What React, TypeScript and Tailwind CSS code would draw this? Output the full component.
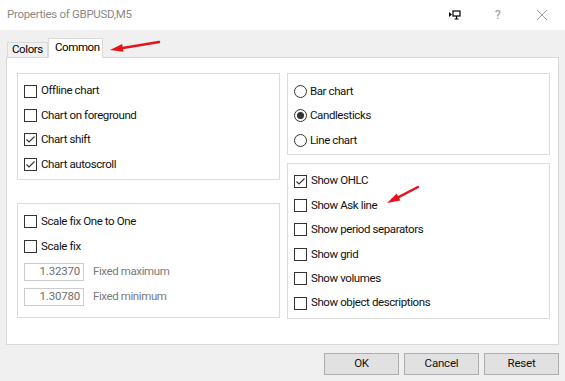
import React from "react";

const font = { fontFamily: "Roboto, 'Noto Sans', sans-serif" };

const Check = ({ checked, label }: { checked?: boolean; label: string }) => (
  <div className="flex items-center h-[24.4px] pl-[6px]">
    <span className="w-[13px] h-[13px] border border-[#333333] bg-white flex items-center justify-center shrink-0">
      {checked && (
        <svg width="11" height="11" viewBox="0 0 11 11">
          <polyline points="1.5,5.5 4,8 9.5,2.5" fill="none" stroke="#333" strokeWidth="1.1" />
        </svg>
      )}
    </span>
    <span className="ml-[4px] text-[11.5px] tracking-[-0.4px] text-[#111] leading-none">{label}</span>
  </div>
);

const Radio = ({ checked, label }: { checked?: boolean; label: string }) => (
  <div className="flex items-center h-[24.5px] pl-[6px]">
    <span className="w-[13px] h-[13px] rounded-full border border-[#333333] bg-white flex items-center justify-center shrink-0">
      {checked && <span className="w-[7px] h-[7px] rounded-full bg-[#333333]" />}
    </span>
    <span className="ml-[3px] text-[11.5px] tracking-[-0.4px] text-[#111] leading-none">{label}</span>
  </div>
);

const Fixed = ({ value, label }: { value: string; label: string }) => (
  <div className="flex items-center h-[25px] pl-[6px]">
    <div className="w-[60px] h-[18px] border border-[#cccccc] bg-white flex items-center justify-end pr-[3px] text-[11.5px] tracking-[-0.2px] text-[#6d6d6d]">
      {value}
    </div>
    <span className="ml-[9px] text-[11.5px] tracking-[-0.4px] text-[#7a7a7a]">{label}</span>
  </div>
);

const Arrow = ({ x1, y1, x2, y2 }: { x1: number; y1: number; x2: number; y2: number }) => {
  const a = Math.atan2(y2 - y1, x2 - x1);
  const l = 13;
  const w = 4;
  const bx = x2 - l * Math.cos(a);
  const by = y2 - l * Math.sin(a);
  const p1 = `${bx + w * Math.sin(a)},${by - w * Math.cos(a)}`;
  const p2 = `${bx - w * Math.sin(a)},${by + w * Math.cos(a)}`;
  return (
    <svg className="absolute left-0 top-0 pointer-events-none" width="565" height="381">
      <line x1={x1} y1={y1} x2={bx} y2={by} stroke="#e5141c" strokeWidth="2.5" strokeLinecap="round" />
      <polygon points={`${x2},${y2} ${p1} ${p2}`} fill="#e5141c" />
    </svg>
  );
};

export default function App() {
  return (
    <div className="relative w-[565px] h-[381px] bg-[#f0f0f0] overflow-hidden" style={font}>
      {/* title bar */}
      <div className="h-[30px] bg-white flex items-center">
        <span className="ml-[7px] text-[11.5px] tracking-[-0.3px] text-[#8a8a8a]">Properties of GBPUSD,M5</span>
        <div className="ml-auto flex items-center">
          <svg width="12" height="10" viewBox="0 0 12 10" className="mr-[34px]">
            <polygon points="0,2 3,4.5 0,7" fill="#000" />
            <rect x="4" y="1" width="7" height="5" fill="none" stroke="#000" strokeWidth="1.2" />
            <line x1="7.5" y1="6" x2="7.5" y2="9" stroke="#000" strokeWidth="1.2" />
            <line x1="5.5" y1="9" x2="9.5" y2="9" stroke="#000" strokeWidth="1" />
          </svg>
          <span className="text-[13px] text-[#9a9a9a] mr-[35px]">?</span>
          <svg width="12" height="12" viewBox="0 0 12 12" className="mr-[17px]">
            <path d="M1 1 L11 11 M11 1 L1 11" stroke="#9a9a9a" strokeWidth="1" />
          </svg>
        </div>
      </div>

      {/* tabs */}
      <div className="h-[27px] flex items-end pl-[7px]">
        <div className="h-[15px] w-[41px] border border-b-0 border-[#d9d9d9] bg-[#f0f0f0] text-[11.5px] tracking-[-0.4px] leading-none pl-[4px] flex items-center">
          Colors
        </div>
        <div className="h-[20px] w-[55px] border border-b-0 border-[#d9d9d9] bg-white text-[11.5px] tracking-[-0.4px] leading-none pl-[6px] pt-[3px] -mb-[1px] relative z-10">
          Common
        </div>
      </div>

      {/* panel */}
      <div className="ml-[6px] w-[553px] h-[288px] border border-[#d9d9d9] bg-white grid grid-cols-[263px_263px] gap-x-[7px] pl-[10px] pt-[15px]">
        <div className="flex flex-col">
          <div className="h-[107px] border border-[#dcdcdc] pt-[5px]">
            <Check label="Offline chart" />
            <Check label="Chart on foreground" />
            <Check checked label="Chart shift" />
            <Check checked label="Chart autoscroll" />
          </div>
          <div className="mt-[23px] h-[115px] border border-[#dcdcdc] pt-[5px]">
            <div className="flex items-center h-[25px] pl-[6px]">
              <span className="w-[13px] h-[13px] border border-[#333333] bg-white shrink-0" />
              <span className="ml-[4px] text-[11.5px] tracking-[-0.4px] text-[#111]">Scale fix One to One</span>
            </div>
            <div className="flex items-center h-[25px] pl-[6px]">
              <span className="w-[13px] h-[13px] border border-[#333333] bg-white shrink-0" />
              <span className="ml-[4px] text-[11.5px] tracking-[-0.4px] text-[#111]">Scale fix</span>
            </div>
            <Fixed value="1.32370" label="Fixed maximum" />
            <Fixed value="1.30780" label="Fixed minimum" />
          </div>
        </div>
        <div className="flex flex-col">
          <div className="h-[82px] border border-[#dcdcdc] pt-[5px]">
            <Radio label="Bar chart" />
            <Radio checked label="Candlesticks" />
            <Radio label="Line chart" />
          </div>
          <div className="mt-[8px] h-[156px] border border-[#dcdcdc] pt-[5px]">
            <Check checked label="Show OHLC" />
            <Check label="Show Ask line" />
            <Check label="Show period separators" />
            <Check label="Show grid" />
            <Check label="Show volumes" />
            <Check label="Show object descriptions" />
          </div>
        </div>
      </div>

      {/* buttons */}
      <div className="flex justify-end gap-[5px] pr-[6px] mt-[8px]">
        {["OK", "Cancel", "Reset"].map((b) => (
          <button
            key={b}
            className="w-[75px] h-[22px] border border-[#adadad] bg-[#e1e1e1] text-[11.5px] tracking-[-0.2px] text-[#111]"
          >
            {b}
          </button>
        ))}
      </div>

      <Arrow x1={159} y1={42} x2={110} y2={50} />
      <Arrow x1={418} y1={187} x2={387} y2={203} />
    </div>
  );
}
